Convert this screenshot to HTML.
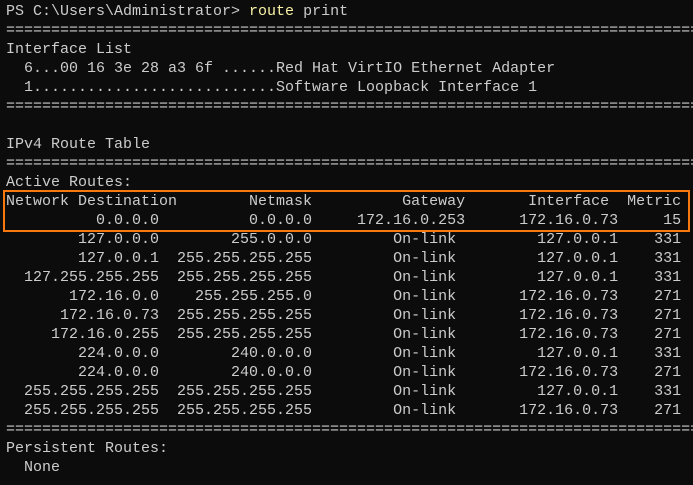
<!DOCTYPE html>
<html><head><meta charset="utf-8"><style>
html,body{margin:0;padding:0;background:#0c0c0c;width:693px;height:485px;overflow:hidden;}
pre{margin:0;position:absolute;left:6px;top:2px;font-family:"Liberation Mono",monospace;font-size:15px;line-height:19px;color:#cccccc;white-space:pre;}
.y{color:#f9f1a5;}
.box{position:absolute;left:3px;top:190px;width:683px;height:38px;border:2px solid #f7780f;}
</style></head><body>
<pre>PS C:\Users\Administrator&gt; <span class="y">route</span> print
===============================================================================
Interface List
  6...00 16 3e 28 a3 6f ......Red Hat VirtIO Ethernet Adapter
  1...........................Software Loopback Interface 1
===============================================================================

IPv4 Route Table
===============================================================================
Active Routes:
Network Destination        Netmask          Gateway       Interface  Metric
          0.0.0.0          0.0.0.0     172.16.0.253      172.16.0.73     15
        127.0.0.0        255.0.0.0         On-link         127.0.0.1    331
        127.0.0.1  255.255.255.255         On-link         127.0.0.1    331
  127.255.255.255  255.255.255.255         On-link         127.0.0.1    331
       172.16.0.0    255.255.255.0         On-link       172.16.0.73    271
      172.16.0.73  255.255.255.255         On-link       172.16.0.73    271
     172.16.0.255  255.255.255.255         On-link       172.16.0.73    271
        224.0.0.0        240.0.0.0         On-link         127.0.0.1    331
        224.0.0.0        240.0.0.0         On-link       172.16.0.73    271
  255.255.255.255  255.255.255.255         On-link         127.0.0.1    331
  255.255.255.255  255.255.255.255         On-link       172.16.0.73    271
===============================================================================
Persistent Routes:
  None
</pre>
<div class="box"></div>
</body></html>
